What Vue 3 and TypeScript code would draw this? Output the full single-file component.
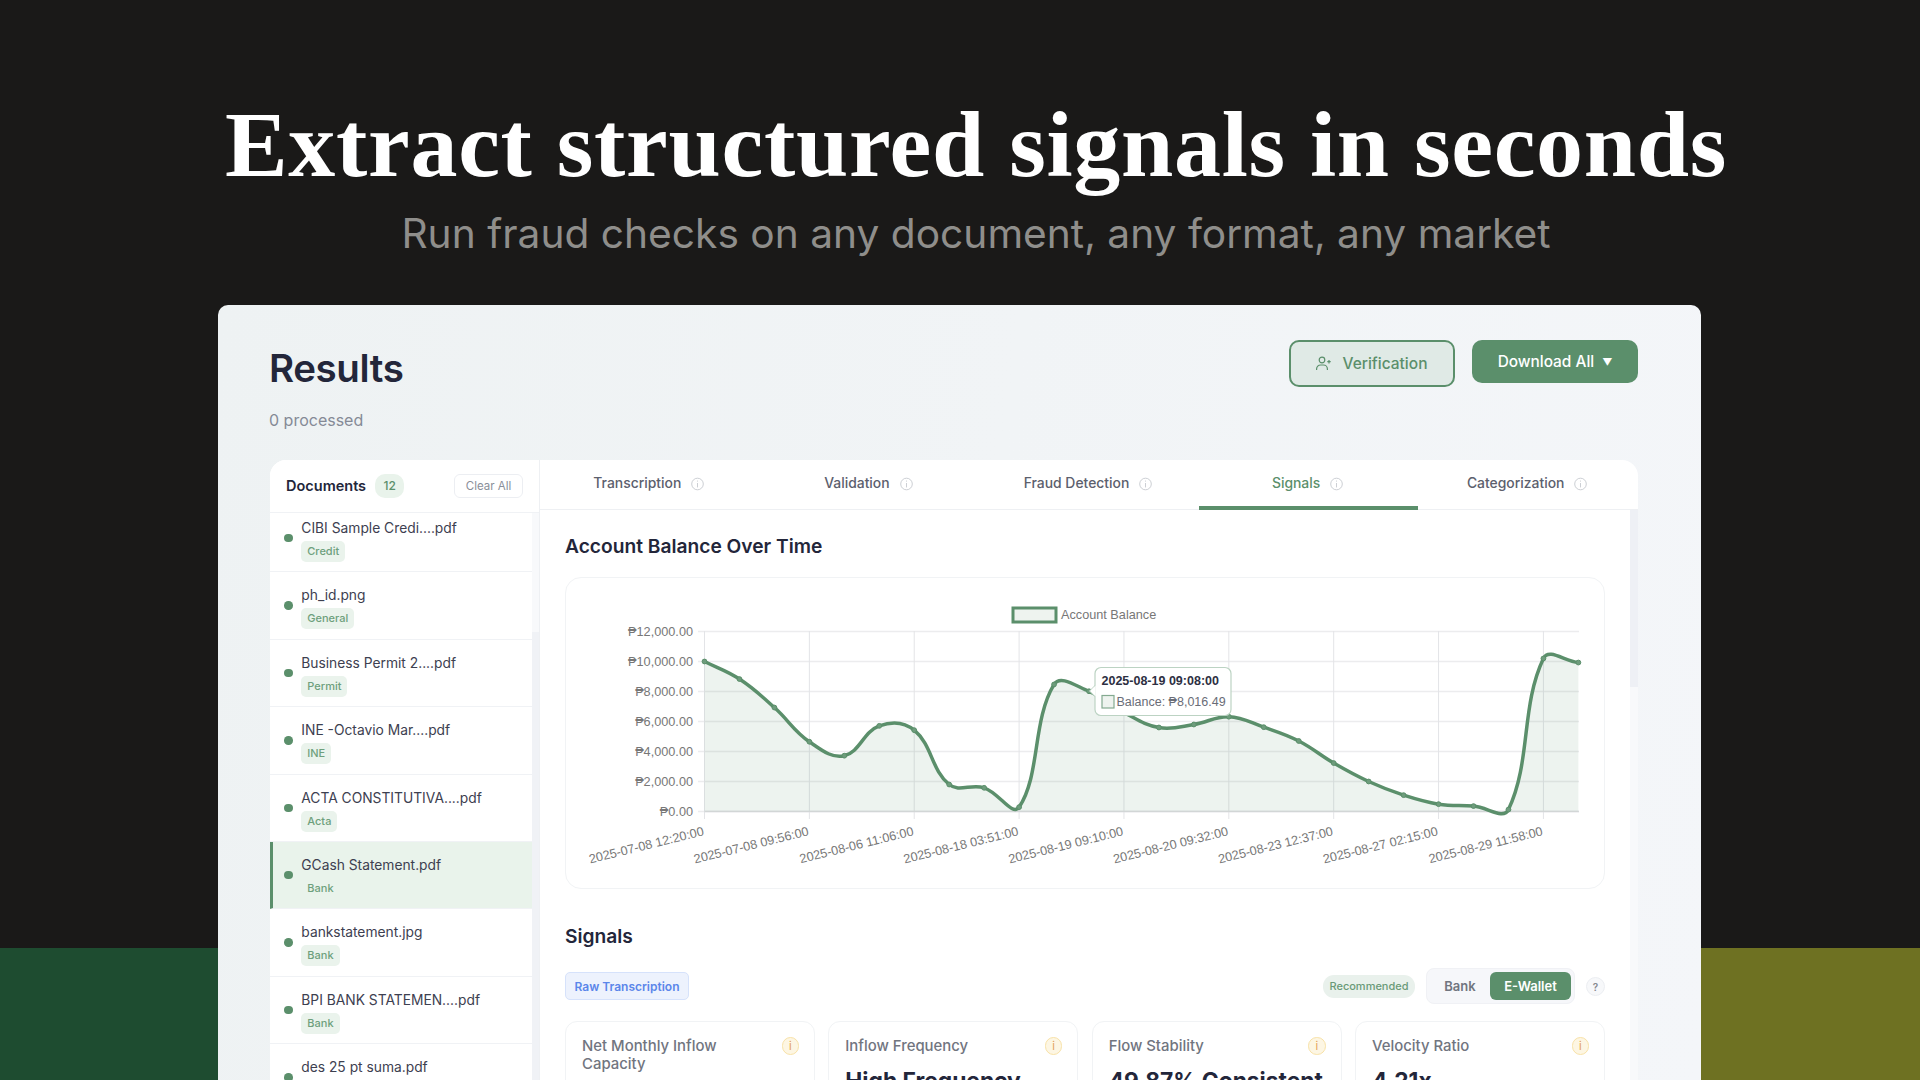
<template>
  <div class="page">
    <div class="band"></div>
    <header class="hero">
      <h1>Extract structured signals in seconds</h1>
      <p>Run fraud checks on any document, any format, any market</p>
    </header>

    <section class="window">
      <div class="top">
        <div class="heading">
          <h2>Results</h2>
          <div class="processed">0 processed</div>
        </div>
        <div class="actions">
          <button class="btn-outline">
            <svg width="17" height="15" viewBox="0 0 17 15" fill="none" stroke="currentColor" stroke-width="1.2">
              <circle cx="7" cy="4" r="2.8" />
              <path d="M1.6 14v-1a4 4 0 0 1 4-4h2.8a4 4 0 0 1 4 4v1" />
              <path d="M14 4v3.4M12.3 5.7h3.4" />
            </svg>
            Verification
          </button>
          <button class="btn-solid">Download All <span class="caret">▼</span></button>
        </div>
      </div>

      <div class="panel">
        <aside class="sidebar">
          <div class="side-head">
            <span class="side-title">Documents</span>
            <span class="count">12</span>
            <button class="clear">Clear All</button>
          </div>
          <div class="doc-list">
            <div
              v-for="doc in docs"
              :key="doc.name"
              class="doc"
              :class="{ active: doc.active }"
            >
              <span class="dot"></span>
              <div class="doc-body">
                <div class="doc-name">{{ doc.name }}</div>
                <span v-if="doc.tag" class="tag">{{ doc.tag }}</span>
              </div>
            </div>
          </div>
        </aside>

        <div class="content">
          <nav class="tabs">
            <div v-for="tab in tabs" :key="tab" class="tab" :class="{ current: tab === 'Signals' }">
              <span>{{ tab }}</span>
              <svg width="13" height="14" viewBox="0 0 13 14" fill="none" stroke="#c6c9cf" stroke-width="0.9">
                <circle cx="6.5" cy="7" r="5.8" />
                <path d="M6.5 6v4.4M6.5 3.6v1" />
              </svg>
            </div>
          </nav>

          <div class="scroll">
            <h3 class="chart-title">Account Balance Over Time</h3>
            <div class="chart-card">
              <svg class="chart" width="1039" height="311" viewBox="564 577 1039 311">
                <rect x="1012" y="608" width="43" height="14" fill="#eef3ef" stroke="#5b8f6b" stroke-width="3" />
                <text x="1060" y="619" class="tick">Account Balance</text>

                <g stroke="#ececee" stroke-width="1.5">
                  <line v-for="t in yTicks" :key="t.label" x1="697" :x2="1578" :y1="t.y" :y2="t.y" />
                </g>
                <g stroke="#e3e4e7" stroke-width="1">
                  <line v-for="t in xTicks" :key="t.label" :x1="t.x" :x2="t.x" y1="631" y2="819" />
                </g>
                <line x1="703.5" x2="1578" y1="811.5" y2="811.5" stroke="#d9dadd" stroke-width="1.5" />

                <text v-for="t in yTicks" :key="t.label" x="692" :y="t.y + 4.5" text-anchor="end" class="tick">{{ t.label }}</text>
                <text
                  v-for="t in xTicks"
                  :key="t.label"
                  class="tick"
                  text-anchor="end"
                  :transform="`translate(${t.x} 835) rotate(-14)`"
                >{{ t.label }}</text>

                <path :d="areaPath" fill="#5b8f6b" fill-opacity="0.11" />
                <path :d="linePath" fill="none" stroke="#5b8f6b" stroke-width="3.5" />
                <circle v-for="(p, i) in points" :key="i" :cx="p[0]" :cy="p[1]" r="2.4" fill="#6e9c7c" stroke="#5b8f6b" stroke-width="1" />

                <path d="M1094.5 685l-6 6 6 6" fill="#fff" stroke="#bcd3c3" stroke-width="1" />
                <rect x="1094" y="667.5" width="136" height="48" rx="6" fill="#fff" stroke="#bcd3c3" stroke-width="1.2" />
                <path d="M1094.7 685.5l-5 5.5 5 5.5z" fill="#fff" />
                <text x="1100.5" y="684.5" class="tip-title">2025-08-19 09:08:00</text>
                <rect x="1101" y="695.5" width="12" height="12.5" fill="#eef3ef" stroke="#84aa90" stroke-width="1.2" />
                <text x="1115.5" y="706" class="tip-body">Balance: ₱8,016.49</text>
              </svg>
            </div>

            <h3 class="signals-title">Signals</h3>
            <div class="signals-bar">
              <button class="raw">Raw Transcription</button>
              <div class="bar-right">
                <span class="recommended">Recommended</span>
                <div class="toggle">
                  <span class="opt">Bank</span>
                  <span class="opt on">E-Wallet</span>
                </div>
                <span class="help">?</span>
              </div>
            </div>

            <div class="metrics">
              <div v-for="m in metrics" :key="m.label" class="metric">
                <div class="metric-head">
                  <span class="metric-label">{{ m.label }}</span>
                  <span class="metric-info">i</span>
                </div>
                <div v-if="m.value" class="metric-value">{{ m.value }}</div>
              </div>
            </div>
          </div>
        </div>
      </div>
    </section>
  </div>
</template>

<script setup lang="ts">
const tabs = ['Transcription', 'Validation', 'Fraud Detection', 'Signals', 'Categorization']

const docs = [
  { name: 'CIBI Sample Credi....pdf', tag: 'Credit' },
  { name: 'ph_id.png', tag: 'General' },
  { name: 'Business Permit 2....pdf', tag: 'Permit' },
  { name: 'INE -Octavio Mar....pdf', tag: 'INE' },
  { name: 'ACTA CONSTITUTIVA....pdf', tag: 'Acta' },
  { name: 'GCash Statement.pdf', tag: 'Bank', active: true },
  { name: 'bankstatement.jpg', tag: 'Bank' },
  { name: 'BPI BANK STATEMEN....pdf', tag: 'Bank' },
  { name: 'des 25 pt suma.pdf', tag: '' }
]

const metrics = [
  { label: 'Net Monthly Inflow Capacity', value: '' },
  { label: 'Inflow Frequency', value: 'High Frequency' },
  { label: 'Flow Stability', value: '49.87% Consistent' },
  { label: 'Velocity Ratio', value: '4.21x' }
]

// chart plot area in page pixels
const x0 = 703.5
const stepX = 34.955
const zero = 811.5
const balances = [
  10000, 8830, 6930, 4650, 3720, 5710, 5420, 1800, 1580, 290, 8470, 8016, 6600, 5600, 5800,
  6320, 5620, 4700, 3230, 2000, 1090, 490, 360, 130, 10200, 9930
]
const points: [number, number][] = balances.map((b, i) => [x0 + i * stepX, zero - (b / 12000) * 180])

const yTicks = [12000, 10000, 8000, 6000, 4000, 2000, 0].map((v) => ({
  y: zero - (v / 12000) * 180,
  label: '₱' + v.toLocaleString('en-US', { minimumFractionDigits: 2 })
}))

const xLabels = [
  '2025-07-08 12:20:00',
  '2025-07-08 09:56:00',
  '2025-08-06 11:06:00',
  '2025-08-18 03:51:00',
  '2025-08-19 09:10:00',
  '2025-08-20 09:32:00',
  '2025-08-23 12:37:00',
  '2025-08-27 02:15:00',
  '2025-08-29 11:58:00'
]
const xTicks = xLabels.map((label, i) => ({ label, x: x0 + i * 3 * stepX }))

// same bezier control points chart.js uses with tension 0.4
function smooth(pts: [number, number][], tension: number) {
  let d = `M${pts[0][0]} ${pts[0][1]}`
  const ctrl = pts.map((cur, i) => {
    const prev = pts[i - 1] ?? cur
    const next = pts[i + 1] ?? cur
    const d01 = Math.hypot(cur[0] - prev[0], cur[1] - prev[1])
    const d12 = Math.hypot(next[0] - cur[0], next[1] - cur[1])
    const total = d01 + d12 || 1
    const fa = (tension * d01) / total
    const fb = (tension * d12) / total
    return {
      before: [cur[0] - fa * (next[0] - prev[0]), cur[1] - fa * (next[1] - prev[1])],
      after: [cur[0] + fb * (next[0] - prev[0]), cur[1] + fb * (next[1] - prev[1])]
    }
  })
  for (let i = 1; i < pts.length; i++) {
    const a = ctrl[i - 1].after
    const b = ctrl[i].before
    d += `C${a[0]} ${a[1]} ${b[0]} ${b[1]} ${pts[i][0]} ${pts[i][1]}`
  }
  return d
}

const linePath = smooth(points, 0.4)
const areaPath = `${linePath}L${points[points.length - 1][0]} ${zero}L${x0} ${zero}Z`
</script>

<style>
html,
body {
  margin: 0;
  background: #1a1918;
}
</style>

<style scoped>
.page {
  position: relative;
  display: flex;
  flex-direction: column;
  height: 1080px;
  overflow: hidden;
  background: #1a1918;
  font-family: Inter, 'Noto Sans', sans-serif;
}

.band {
  position: absolute;
  left: 0;
  right: 0;
  bottom: 0;
  height: 132px;
  background: linear-gradient(90deg, #1e4c30 0%, #1e4c30 12%, #6e7122 88%, #6e7122 100%);
}

.hero {
  flex: none;
  height: 305px;
  padding-left: 32px;
  text-align: center;
}

.hero h1 {
  margin: 0;
  padding-top: 90px;
  font-family: 'Liberation Serif', serif;
  font-weight: 700;
  font-size: 94px;
  line-height: 108px;
  letter-spacing: 0.7px;
  color: #fff;
}

.hero p {
  margin: 12px 0 0;
  font-size: 40.7px;
  line-height: 48px;
  color: #8f8e8b;
}

.window {
  position: relative;
  flex: 1;
  min-height: 0;
  margin: 0 219px 0 218px;
  padding: 0 63px 0 52px;
  border-radius: 10px 10px 0 0;
  background: linear-gradient(100deg, #eef2f3, #f4f6f9);
  overflow: hidden;
}

.top {
  display: flex;
  justify-content: space-between;
  align-items: flex-start;
  height: 155px;
  padding-top: 35px;
  box-sizing: border-box;
}

.heading {
  margin-left: -1px;
}

.top h2 {
  margin: 5px 0 0;
  font-size: 38.5px;
  line-height: 46px;
  font-weight: 600;
  letter-spacing: -0.4px;
  color: #23263a;
}

.processed {
  margin-top: 19px;
  font-size: 16px;
  color: #858a96;
}

.actions {
  display: flex;
  align-items: flex-start;
  gap: 17px;
}

.btn-outline,
.btn-solid {
  display: flex;
  align-items: center;
  justify-content: center;
  box-sizing: border-box;
  width: 166px;
  border-radius: 10px;
  font-family: inherit;
}

.btn-outline {
  gap: 11px;
  height: 47px;
  padding: 0 2px 0 0;
  border: 2px solid #5b8f6b;
  background: #e0eae6;
  color: #5b8f6b;
  font-size: 15.5px;
  font-weight: 500;
}

.btn-solid {
  gap: 8px;
  height: 43px;
  border: 0;
  background: #5b8f6b;
  color: #fff;
  font-size: 15.4px;
  font-weight: 500;
}

.caret {
  font-size: 10px;
}

.panel {
  display: flex;
  height: 700px;
  background: #fff;
  border-radius: 16px 16px 0 0;
  overflow: hidden;
}

.sidebar {
  flex: none;
  width: 269px;
  border-right: 1px solid #eef0f3;
  display: flex;
  flex-direction: column;
}

.side-head {
  position: relative;
  z-index: 1;
  flex: none;
  display: flex;
  align-items: center;
  box-sizing: border-box;
  height: 53px;
  padding: 0 16px;
  background: #fff;
  border-bottom: 1px solid #f0f2f5;
}

.side-title {
  margin-top: -2px;
  font-size: 14.5px;
  font-weight: 600;
  color: #23263a;
}

.count {
  margin-left: 9px;
  width: 29px;
  height: 24px;
  line-height: 24px;
  text-align: center;
  border-radius: 10px;
  background: #e9f3eb;
  color: #5b8f6b;
  font-size: 12px;
  font-weight: 500;
}

.clear {
  margin-left: auto;
  width: 69px;
  height: 24px;
  padding: 0;
  background: #fff;
  border: 1px solid #eceef2;
  border-radius: 6px;
  font-family: inherit;
  font-size: 11.5px;
  color: #8a8f99;
}

.doc-list {
  flex: 1;
  margin-top: -8px;
  padding-right: 7px;
  background: linear-gradient(#f8f9fb 127px, #f0f2f6 127px);
  overflow: hidden;
}

.doc {
  display: flex;
  align-items: center;
  box-sizing: border-box;
  height: 67.4px;
  padding-left: 14px;
  background: #fff;
  border-bottom: 1px solid #f0f2f5;
}

.doc.active {
  background: #e9f3eb;
  border-left: 3px solid #5b8f6b;
  padding-left: 11px;
}

.dot {
  flex: none;
  width: 8.5px;
  height: 8.5px;
  border-radius: 50%;
  background: #5b8f6b;
}

.doc-body {
  align-self: flex-start;
  margin-left: 8.8px;
  padding-top: 14px;
}

.doc-name {
  font-size: 13.8px;
  line-height: 18px;
  color: #3d4050;
}

.tag {
  display: inline-block;
  margin-top: 4px;
  padding: 0 6px;
  height: 21px;
  line-height: 21px;
  border-radius: 5px;
  background: #eaf3ec;
  color: #6ea07c;
  font-size: 11px;
  font-weight: 500;
}

.doc.active .tag {
  background: transparent;
}

.content {
  flex: 1;
  min-width: 0;
  display: flex;
  flex-direction: column;
}

.tabs {
  flex: none;
  display: grid;
  grid-template-columns: repeat(5, 1fr);
  height: 50px;
  box-sizing: border-box;
  border-bottom: 1px solid #eef0f3;
}

.tab {
  display: flex;
  align-items: flex-start;
  justify-content: center;
  gap: 10px;
  padding: 13px 2px 0 0;
  height: 50px;
  box-sizing: border-box;
  font-size: 13.9px;
  line-height: 20px;
  font-weight: 500;
  color: #5c606d;
}

.tab svg {
  margin-top: 4px;
}

.tab.current {
  color: #5b8f6b;
  border-bottom: 4px solid #5b8f6b;
}

.scroll {
  position: relative;
  flex: 1;
  padding: 24px 33px 0 25px;
  background: linear-gradient(#fff, #fff) left / calc(100% - 8px) 100% no-repeat,
    linear-gradient(#eef0f5 177px, #f8f9fb 177px) right / 8px 100% no-repeat;
}

.chart-title,
.signals-title {
  margin: 0;
  font-size: 19.2px;
  line-height: 24px;
  font-weight: 600;
  color: #23263a;
}

.chart-card {
  margin-top: 19px;
  height: 312px;
  box-sizing: border-box;
  border: 1px solid #f1f3f5;
  border-radius: 16px;
  overflow: hidden;
}

.chart {
  display: block;
  margin: -1px 0 0 -1px;
  font-family: 'Liberation Sans', Arial, sans-serif;
}

.tick {
  font-size: 12.7px;
  fill: #777;
}

.tip-title {
  font-size: 12.5px;
  font-weight: 700;
  fill: #2d2f42;
}

.tip-body {
  font-size: 12.5px;
  fill: #6a6d77;
}

.signals-title {
  margin-top: 35px;
}

.signals-bar {
  display: flex;
  align-items: center;
  justify-content: space-between;
  margin-top: 20px;
  height: 36px;
}

.raw {
  width: 124px;
  height: 28px;
  padding: 0;
  background: #edf2fd;
  border: 1px solid #d6e2fb;
  border-radius: 5px;
  color: #5b86ea;
  font-family: inherit;
  font-size: 12px;
  font-weight: 600;
}

.bar-right {
  display: flex;
  align-items: center;
  gap: 11px;
}

.recommended {
  width: 92px;
  height: 23px;
  line-height: 23px;
  text-align: center;
  border-radius: 11px;
  background: #e9f1ec;
  color: #6a9a78;
  font-size: 11px;
  font-weight: 500;
}

.toggle {
  display: flex;
  align-items: center;
  box-sizing: border-box;
  width: 149px;
  height: 36px;
  padding: 3px;
  background: #f6f7fa;
  border: 1px solid #f0f1f5;
  border-radius: 8px;
}

.opt {
  flex: 1;
  text-align: center;
  font-size: 13px;
  font-weight: 600;
  color: #71757f;
}

.opt.on {
  flex: none;
  width: 81px;
  height: 28px;
  line-height: 28px;
  border-radius: 6px;
  background: #5b8f6b;
  color: #fff;
}

.help {
  width: 19px;
  height: 19px;
  line-height: 18px;
  text-align: center;
  box-sizing: border-box;
  border: 1px solid #eceef2;
  border-radius: 50%;
  background: #f7f8fa;
  color: #85888f;
  font-size: 10px;
  font-weight: 600;
}

.metrics {
  display: grid;
  grid-template-columns: repeat(4, 1fr);
  gap: 13.3px;
  margin-top: 17px;
}

.metric {
  height: 140px;
  box-sizing: border-box;
  padding: 15px 15px 0 16px;
  border: 1px solid #f1f3f5;
  border-radius: 12px;
}

.metric-head {
  display: flex;
  justify-content: space-between;
  align-items: flex-start;
}

.metric-label {
  max-width: 170px;
  font-size: 14.9px;
  line-height: 18.4px;
  font-weight: 500;
  color: #71757f;
}

.metric-info {
  flex: none;
  width: 17.5px;
  height: 17.5px;
  line-height: 16px;
  text-align: center;
  box-sizing: border-box;
  border: 1px solid #f8e2a8;
  border-radius: 50%;
  background: #fdf6e3;
  color: #e3a15a;
  font-size: 11px;
}

.metric-value {
  margin-top: 11px;
  font-size: 22.8px;
  line-height: 30px;
  font-weight: 700;
  white-space: nowrap;
  color: #23263a;
}
</style>
